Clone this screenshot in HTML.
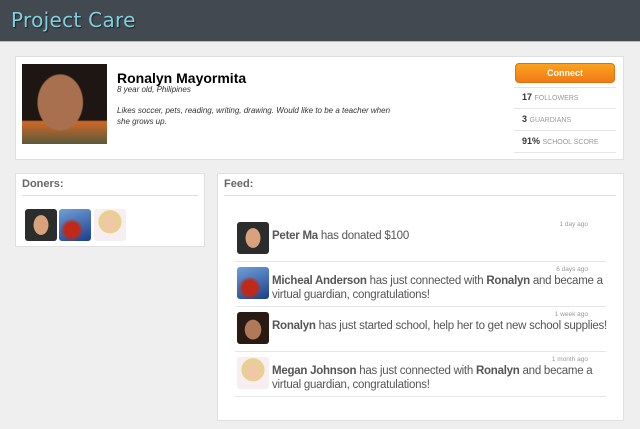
<!DOCTYPE html>
<html><head><style>
*{margin:0;padding:0;box-sizing:border-box}
body{width:640px;height:429px;background:#efefef;font-family:"Liberation Sans",sans-serif;position:relative;overflow:hidden;color:#555}
.hdr{position:absolute;left:0;top:0;width:640px;height:42px;background:#434950;border-bottom:1px solid #bbb}
.logo{position:absolute;left:11px;top:8px;font-family:"DejaVu Sans",sans-serif;font-size:20px;color:#7fd0dc;text-shadow:1px 1px 1px #222;letter-spacing:0.3px}
.card{position:absolute;background:#fff;border:1px solid #e0e0e0}
.ab{position:absolute}
.av{position:absolute;width:32px;height:32px;border-radius:3px}
.peter{background:radial-gradient(ellipse 9px 12px at 50% 50%,#d9a27c 80%,transparent 85%),#2a2d2c}
.mich{background:radial-gradient(circle at 40% 65%,#c02818 25%,transparent 40%),linear-gradient(160deg,#6fa0d8,#1d3e8a)}
.ron{background:radial-gradient(ellipse 10px 12px at 50% 55%,#b07a58 80%,transparent 85%),#2a1a14}
.megan{background:radial-gradient(ellipse 8px 10px at 50% 45%,#f0c8a8 80%,transparent 85%),radial-gradient(ellipse 14px 14px at 50% 40%,#e8d090 80%,transparent 85%),#f6eef0}
.txt{position:absolute;left:272px;font-size:11.5px;letter-spacing:-0.25px;color:#555;line-height:14px;width:342px}
.txt b{color:#555}
.time{position:absolute;right:52px;font-size:6.5px;color:#999}
.ln{position:absolute;left:235px;width:371px;height:1px;background:#e6e6e6}
.st{position:absolute;left:522px;font-size:9px;color:#333;font-weight:bold}
.st span{font-weight:normal;font-size:7px;color:#999}
.sl{position:absolute;left:514px;width:102px;height:1px;background:#e6e6e6}
</style></head><body>
<div class="hdr"><div class="logo">Project Care</div></div>
<div class="card" style="left:15px;top:56px;width:609px;height:104px"></div>
<div class="ab" style="left:22px;top:64px;width:85px;height:80px;background:radial-gradient(ellipse 26px 32px at 45% 48%,#a8704e 85%,transparent 90%),linear-gradient(#1e1612 70%,#d06828 72%,#5a5a3a)"></div>
<div class="ab" style="left:117px;top:70px;font-size:14px;font-weight:bold;color:#000">Ronalyn Mayormita</div>
<div class="ab" style="left:117px;top:85px;font-size:8px;font-style:italic;color:#333">8 year old, Philipines</div>
<div class="ab" style="left:117px;top:105px;font-size:8px;font-style:italic;color:#333;width:285px;line-height:11px">Likes soccer, pets, reading, writing, drawing. Would like to be a teacher when she grows up.</div>
<div class="ab" style="left:515px;top:63px;width:100px;height:20px;border-radius:4px;background:linear-gradient(#faa21e,#f07b18);border:1px solid #e07010;color:#fff;font-size:9px;font-weight:bold;text-align:center;line-height:18px">Connect</div>
<div class="sl" style="top:87px"></div>
<div class="st" style="top:92px">17 <span>FOLLOWERS</span></div>
<div class="sl" style="top:108px"></div>
<div class="st" style="top:114px">3 <span>GUARDIANS</span></div>
<div class="sl" style="top:130px"></div>
<div class="st" style="top:136px">91% <span>SCHOOL SCORE</span></div>
<div class="sl" style="top:152px"></div>

<div class="card" style="left:15px;top:173px;width:190px;height:74px"></div>
<div class="ab" style="left:22px;top:178px;font-size:11px;font-weight:bold;color:#666">Doners:</div>
<div class="ab" style="left:22px;top:195px;width:176px;height:1px;background:#ddd"></div>
<div class="av peter" style="left:25px;top:209px"></div>
<div class="av mich" style="left:59px;top:209px"></div>
<div class="av megan" style="left:94px;top:209px"></div>

<div class="card" style="left:217px;top:173px;width:407px;height:248px"></div>
<div class="ab" style="left:224px;top:178px;font-size:11px;font-weight:bold;color:#666">Feed:</div>
<div class="ab" style="left:224px;top:195px;width:392px;height:1px;background:#ddd"></div>

<div class="av peter" style="left:237px;top:222px"></div>
<div class="time" style="top:221px">1 day ago</div>
<div class="txt" style="top:229px"><b>Peter Ma</b> has donated $100</div>
<div class="ln" style="top:261px"></div>
<div class="av mich" style="left:237px;top:267px"></div>
<div class="time" style="top:266px">6 days ago</div>
<div class="txt" style="top:274px"><b>Micheal Anderson</b> has just connected with <b>Ronalyn</b> and became a virtual guardian, congratulations!</div>
<div class="ln" style="top:306px"></div>
<div class="av ron" style="left:237px;top:312px"></div>
<div class="time" style="top:311px">1 week ago</div>
<div class="txt" style="top:319px"><b>Ronalyn</b> has just started school, help her to get new school supplies!</div>
<div class="ln" style="top:351px"></div>
<div class="av megan" style="left:237px;top:357px"></div>
<div class="time" style="top:356px">1 month ago</div>
<div class="txt" style="top:364px"><b>Megan Johnson</b> has just connected with <b>Ronalyn</b> and became a virtual guardian, congratulations!</div>
<div class="ln" style="top:396px"></div>
</body></html>
